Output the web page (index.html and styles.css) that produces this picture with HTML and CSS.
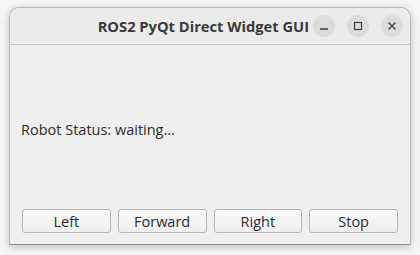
FILE: index.html
```html
<!DOCTYPE html>
<html>
<head>
<meta charset="utf-8">
<link rel="stylesheet" href="styles.css">
</head>
<body>
<div class="window">
  <div class="titlebar">
    <div class="title">ROS2 PyQt Direct Widget GUI</div>
    <div class="controls">
      <div class="ctl"><svg width="22" height="22" viewBox="0 0 22 22"><path d="M7 14h8" stroke="#3d3d3d" stroke-width="1.3"/></svg></div>
      <div class="ctl"><svg width="22" height="22" viewBox="0 0 22 22"><rect x="7.5" y="7.5" width="7" height="7" fill="none" stroke="#3d3d3d" stroke-width="1.2"/></svg></div>
      <div class="ctl"><svg width="22" height="22" viewBox="0 0 22 22"><path d="M7.5 7.5l7 7M14.5 7.5l-7 7" stroke="#3d3d3d" stroke-width="1.4"/></svg></div>
    </div>
  </div>
  <div class="content">
    <div class="status">Robot Status: waiting...</div>
    <div class="buttons">
      <button class="btn">Left</button>
      <button class="btn">Forward</button>
      <button class="btn">Right</button>
      <button class="btn">Stop</button>
    </div>
  </div>
</div>
</body>
</html>
```
FILE: styles.css
```css
html, body {
  margin: 0;
  padding: 0;
  width: 420px;
  height: 255px;
  background: #f6f6f6;
  overflow: hidden;
  font-family: "Open Sans", "DejaVu Sans", sans-serif;
}
body {
  padding: 7px 9px 10px 9px;
  box-sizing: border-box;
}
.window {
  width: 402px;
  height: 238px;
  box-sizing: border-box;
  border: 1px solid #b9b9b9;
  border-bottom-color: #8e8e8e;
  border-radius: 10px 10px 0 0;
  background: #efefef;
  box-shadow: 0 2px 8px rgba(0,0,0,0.22);
  display: flex;
  flex-direction: column;
  overflow: hidden;
}
.titlebar {
  height: 37px;
  flex: none;
  box-sizing: border-box;
  background: #ebebeb;
  border-bottom: 1px solid #c4c4c4;
  display: flex;
  align-items: center;
}
.title {
  flex: 1;
  text-align: right;
  padding-right: 4px;
  font-weight: bold;
  font-size: 14.7px;
  color: #3a3a3a;
}
.controls {
  display: flex;
  gap: 12px;
  padding-right: 7px;
}
.ctl {
  width: 22px;
  height: 22px;
  border-radius: 50%;
  background: #dcdcdc;
}
.ctl svg { display: block; }
.content {
  flex: 1;
  display: flex;
  flex-direction: column;
  gap: 6px;
  padding: 11px 11px 11px 11px;
}
.status {
  flex: 1;
  display: flex;
  align-items: center;
  font-size: 14.5px;
  color: #2c2c2c;
}
.buttons {
  display: flex;
  gap: 7px;
  padding: 0 1px;
}
.btn {
  flex: 1;
  height: 24px;
  box-sizing: border-box;
  border: 1px solid #b5b5b5;
  border-radius: 3px;
  background: linear-gradient(#f9f9f9, #efefef);
  font-family: "Open Sans", "DejaVu Sans", sans-serif;
  font-size: 14.5px;
  color: #2c2c2c;
  padding: 0;
}
```
